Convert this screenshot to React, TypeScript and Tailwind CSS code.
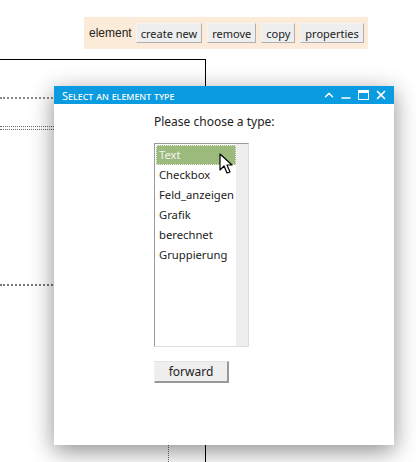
import { ChevronUp, Minus, X } from "lucide-react";

const types = ["Text", "Checkbox", "Feld_anzeigen", "Grafik", "berechnet", "Gruppierung"];

const toolbarButtons = ["create new", "remove", "copy", "properties"];

function ToolButton({ label }: { label: string }) {
  return (
    <button className="h-[20px] px-[4px] bg-[#eeeeee] text-[11px] leading-none text-[#222] border border-t-[#f4f4f4] border-l-[#f4f4f4] border-r-[#b0b0b0] border-b-[#b0b0b0]">
      {label}
    </button>
  );
}

function Cursor() {
  return (
    <svg className="absolute left-[219px] top-[153px]" width="14" height="22" viewBox="0 0 14 22">
      <path d="M1 1 L1 17 L5 13 L8 20 L11 19 L8 12 L13 12 Z" fill="#fff" stroke="#000" strokeWidth="1.2" strokeLinejoin="round" />
    </svg>
  );
}

export default function App() {
  return (
    <div
      className="relative w-[416px] h-[462px] overflow-hidden bg-white"
      style={{ fontFamily: '"Noto Sans", "Open Sans", sans-serif' }}
    >
      {/* design canvas behind the dialog */}
      <div className="absolute left-[-2px] top-[59px] w-[208px] h-[420px] border-t border-r border-black" />
      <div className="absolute left-0 top-[97px] w-[60px] border-t-2 border-dotted border-[#888]" />
      <div className="absolute left-0 top-[126px] w-[60px] border-t border-dotted border-[#666]" />
      <div className="absolute left-0 top-[129px] w-[60px] border-t border-dotted border-[#666]" />
      <div className="absolute left-0 top-[284px] w-[60px] border-t-2 border-dotted border-[#777]" />
      <div className="absolute left-[168px] top-[430px] h-[40px] border-l border-dotted border-[#666]" />

      {/* toolbar */}
      <div className="pl-[84px] pt-[17px]">
        <div className="inline-flex items-center gap-[5px] h-[32px] pl-[5px] pr-[4px] bg-[#fcebd8]">
          <span
            className="text-[12px] text-[#222] mr-[-1px]"
            style={{ fontFamily: '"Liberation Sans", Arial, sans-serif' }}
          >
            element
          </span>
          {toolbarButtons.map((b) => (
            <ToolButton key={b} label={b} />
          ))}
        </div>
      </div>

      {/* dialog */}
      <div className="absolute left-[54px] top-[86px] w-[340px] h-[359px] bg-white shadow-[0_6px_22px_rgba(0,0,0,0.45)] flex flex-col">
        <div className="h-[18px] bg-[#0a9be0] flex items-center pl-[8px] pr-[6px] text-white">
          <span className="text-[11px] leading-none" style={{ fontVariant: "small-caps" }}>
            Select an element type
          </span>
          <div className="ml-auto flex items-center gap-[3px]">
            <ChevronUp size={14} strokeWidth={2.5} />
            <Minus size={14} strokeWidth={2.5} className="translate-y-[3px]" />
            <div className="w-[11px] h-[10px] border-[1.5px] border-white border-t-[3px] mx-[2px]" />
            <X size={14} strokeWidth={3} />
          </div>
        </div>

        <div className="pl-[100px] pt-[10px]">
          <div className="text-[12px] text-[#222] leading-[16px]">Please choose a type:</div>

          <div className="mt-[13px] w-[95px] h-[204px] flex border border-t-[#9a9a9a] border-l-[#9a9a9a] border-r-[#dddddd] border-b-[#dddddd]">
            <div className="flex-1 pt-[1px] pl-[1px]">
              {types.map((t, i) => (
                <div
                  key={t}
                  className={
                    i === 0
                      ? "h-[20px] pl-[2px] flex items-center text-[11.25px] text-[#f4f4f4] bg-[#9cba7c] border border-dotted border-[#e8efe0]"
                      : "h-[20px] pl-[3px] flex items-center text-[11.25px] text-[#222]"
                  }
                >
                  {t}
                </div>
              ))}
            </div>
            <div className="w-[12px] bg-[#eeeeee]" />
          </div>

          <button className="mt-[14px] w-[75px] h-[22px] bg-[#eeeeee] text-[12px] text-[#222] border border-t-[#e4e4e4] border-l-[#f2f2f2] border-r-2 border-b-2 border-r-[#999] border-b-[#999]">
            forward
          </button>
        </div>
      </div>

      <Cursor />
    </div>
  );
}
